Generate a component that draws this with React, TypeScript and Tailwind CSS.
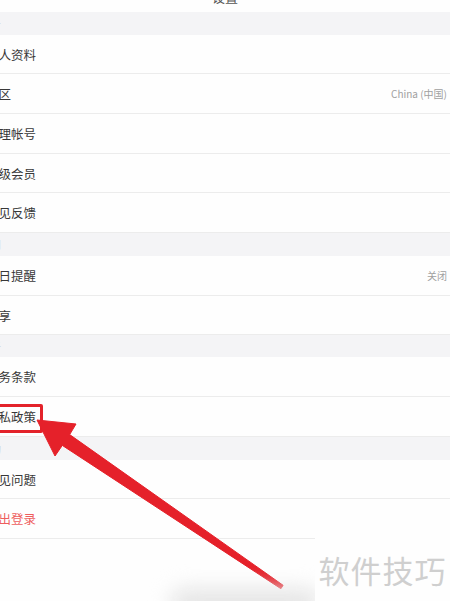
const font = { fontFamily: '"Noto Sans CJK SC", "Noto Sans", sans-serif' };

type Row = { label: string; value?: string; danger?: boolean };
type Section = { title: string; rows: Row[]; gap: string };

const sections: Section[] = [
    {
        title: "账号",
        gap: "h-[22.5px]",
        rows: [
            { label: "个人资料" },
            { label: "地区", value: "China (中国)" },
            { label: "管理帐号" },
            { label: "升级会员" },
            { label: "意见反馈" },
        ],
    },
    {
        title: "通知",
        gap: "h-[23px]",
        rows: [{ label: "每日提醒", value: "关闭" }, { label: "分享" }],
    },
    {
        title: "关于",
        gap: "h-[22px]",
        rows: [{ label: "服务条款" }, { label: "隐私政策" }],
    },
    {
        title: "帮助",
        gap: "h-[23px]",
        rows: [{ label: "常见问题" }, { label: "退出登录", danger: true }],
    },
];

function SettingsRow({ row }: { row: Row }) {
    return (
        <div className="flex h-[39.7px] items-center justify-between border-b border-[#ececec] bg-[#fefefe] pr-[3px]">
            <span
                className={`-ml-[14px] mt-[2px] text-[12.5px] leading-none ${
                    row.danger ? "text-[#ee5e5e]" : "text-[#383838]"
                }`}
            >
                {row.label}
            </span>
            {row.value && (
                <span className="mt-[1px] text-[10px] leading-none text-[#a0a0a0]">
                    {row.value}
                </span>
            )}
        </div>
    );
}

export default function App() {
    return (
        <div
            className="relative h-[601px] w-[450px] overflow-hidden bg-[#fefefe]"
            style={font}
        >
            {/* header, mostly scrolled off */}
            <div className="flex h-[12px] items-start justify-center overflow-hidden">
                <span className="-mt-[10px] text-[13px] leading-[13px] text-[#555]">
                    设置
                </span>
            </div>

            {sections.map((section) => (
                <div key={section.title}>
                    <div
                        className={`flex items-center bg-[#f4f4f6] ${section.gap}`}
                    >
                        <span className="-ml-[21px] text-[11px] leading-none text-[#c4c4c4]">
                            {section.title}
                        </span>
                    </div>
                    {section.rows.map((row) => (
                        <SettingsRow key={row.label} row={row} />
                    ))}
                </div>
            ))}

            {/* red highlight box */}
            <div className="absolute left-[-10px] top-[404px] h-[29px] w-[53px] rounded-[2px] border-[3px] border-[#e3222a]" />

            {/* arrow */}
            <svg
                className="pointer-events-none absolute left-0 top-0"
                width="450"
                height="601"
                viewBox="0 0 450 601"
            >
                <polygon
                    points="37,420 76,424 69.7,434.6 283.1,585.3 280.9,588.7 62.3,445.4 55,456"
                    fill="#e5212a"
                    strokeLinejoin="round"
                    stroke="#e5212a"
                    strokeWidth="1"
                />
            </svg>

            {/* soft blur at bottom */}
            <div className="pointer-events-none absolute left-[170px] top-[588px] h-[30px] w-[150px] rounded-full bg-[#e6e6e6] blur-[10px]" />

            {/* watermark */}
            <div className="absolute left-[315px] top-[538px] flex h-[63px] w-[135px] items-center justify-center bg-[#fefefe]">
                <span className="text-[31px] leading-none tracking-[1px] text-[#cfcfcf]">
                    软件技巧
                </span>
            </div>
        </div>
    );
}
